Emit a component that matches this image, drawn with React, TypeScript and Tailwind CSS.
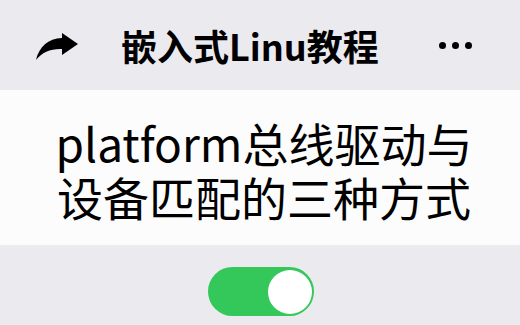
export default function App() {
  return (
    <div
      className="w-[520px] h-[325px] bg-[#ebeaef] flex flex-col overflow-hidden"
      style={{ fontFamily: '"Noto Sans CJK SC", "Noto Sans", sans-serif' }}
    >
      {/* top bar */}
      <div className="h-[90px] flex items-center">
        <svg className="ml-[35px] mt-[2px]" width="44" height="30" viewBox="0 0 44 30">
          <path
            d="M27 2 L43 13 L27 24 L27 18 C16 17.5 7 21 1 29 C4 16 13 7.5 27 7 Z"
            fill="#000"
          />
        </svg>
        <div className="ml-[42px] text-[36px] font-bold text-black leading-none">
          嵌入式Linu教程
        </div>
        <div className="ml-auto mr-[48px] flex gap-[6px]">
          <span className="w-[7px] h-[7px] rounded-full bg-black" />
          <span className="w-[7px] h-[7px] rounded-full bg-black" />
          <span className="w-[7px] h-[7px] rounded-full bg-black" />
        </div>
      </div>

      {/* title card */}
      <div className="h-[155px] bg-[#fcfcfd] flex flex-col items-center justify-center pl-[8px] pt-[2px]">
        <p className="text-[46px] leading-[54px] text-black text-center">platform总线驱动与</p>
        <p className="text-[46px] leading-[54px] text-black text-center">设备匹配的三种方式</p>
      </div>

      {/* toggle */}
      <div className="flex justify-center pt-[22px] pl-[2px]">
        <div className="w-[106px] h-[49px] rounded-full bg-[#34c759] flex items-center justify-end pr-[2px]">
          <div className="w-[44px] h-[44px] rounded-full bg-white" />
        </div>
      </div>
    </div>
  );
}
